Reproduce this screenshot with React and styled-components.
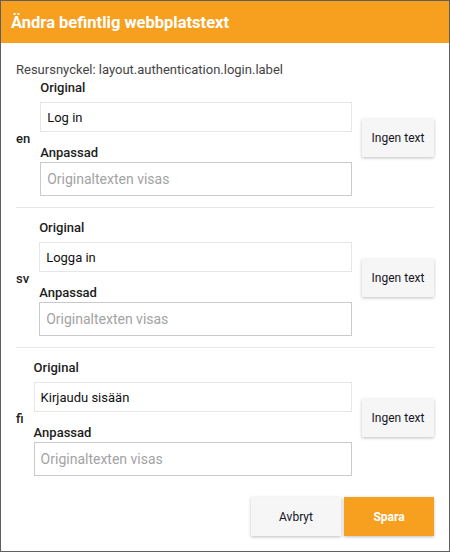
import React from "react";
import styled, { createGlobalStyle } from "styled-components";

const GlobalStyle = createGlobalStyle`
  body {
    margin: 0;
    background: #fff;
    font-family: Roboto, "Liberation Sans", sans-serif;
  }
`;

const languages = [
  { code: "en", original: "Log in" },
  { code: "sv", original: "Logga in" },
  { code: "fi", original: "Kirjaudu sisään" },
];

const Dialog = () => {
  return (
    <Wrapper>
      <Header>
        <Title>Ändra befintlig webbplatstext</Title>
      </Header>
      <Body>
        <ResourceKey>Resursnyckel: layout.authentication.login.label</ResourceKey>
        {languages.map((lang) => (
          <LangRow key={lang.code}>
            <LangCode>{lang.code}</LangCode>
            <Fields>
              <FieldLabel>Original</FieldLabel>
              <TextInput readOnly value={lang.original} />
              <FieldLabel $second>Anpassad</FieldLabel>
              <TextInput $custom placeholder="Originaltexten visas" />
            </Fields>
            <SideButton type="button">Ingen text</SideButton>
          </LangRow>
        ))}
        <Footer>
          <ActionButton type="button">Avbryt</ActionButton>
          <ActionButton type="button" $primary>
            Spara
          </ActionButton>
        </Footer>
      </Body>
    </Wrapper>
  );
};

const Wrapper = styled.div`
  width: 450px;
  height: 552px;
  box-sizing: border-box;
  border: 1px solid #5f5f5f;
  background: #fff;
  display: flex;
  flex-direction: column;
`;

const Header = styled.header`
  height: 42px;
  background: #f79f1f;
  padding: 1px 10px 0;
  box-sizing: border-box;
  display: flex;
  align-items: center;
`;

const Title = styled.h1`
  margin: 0;
  font-size: 16.5px;
  font-weight: 700;
  color: #fff;
`;

const Body = styled.div`
  padding: 19px 15px 15px;
`;

const ResourceKey = styled.div`
  font-size: 13px;
  line-height: 16px;
  color: #444;
  margin-bottom: 2px;
`;

const LangRow = styled.section`
  display: flex;
  align-items: center;
  gap: 10px;
  padding: 12px 0 11px;
  border-bottom: 1px solid #e6e6e6;

  &:first-of-type {
    padding-top: 0;
  }
  &:last-of-type {
    border-bottom: none;
  }
`;

const LangCode = styled.div`
  font-size: 13px;
  font-weight: 500;
  color: #222;
`;

const Fields = styled.div`
  flex: 1;
  display: flex;
  flex-direction: column;
`;

const FieldLabel = styled.label`
  display: block;
  font-size: 13px;
  font-weight: 500;
  line-height: 16px;
  color: #1c1c1c;
  margin: ${(p) => (p.$second ? "13px 0 1px" : "0 0 6px")};
`;

const TextInput = styled.input`
  box-sizing: border-box;
  width: 100%;
  height: ${(p) => (p.$custom ? "34px" : "30px")};
  border: 1px solid ${(p) => (p.$custom ? "#cacaca" : "#e6e6e6")};
  border-radius: 0;
  padding: 0 6px;
  margin: 0;
  font-family: Roboto, sans-serif;
  font-size: ${(p) => (p.$custom ? "14px" : "13px")};
  color: #111;
  background: #fff;
  outline: none;

  &::placeholder {
    color: #a3a3a3;
  }
`;

const SideButton = styled.button`
  width: 72px;
  height: 38px;
  border: none;
  background: #f6f6f6;
  box-shadow: 0 1px 3px rgba(0, 0, 0, 0.25);
  font-family: Roboto, sans-serif;
  font-size: 12px;
  color: #141424;
  padding: 0;
  cursor: pointer;
`;

const Footer = styled.div`
  display: flex;
  justify-content: flex-end;
  gap: 3px;
  margin-top: 10px;
`;

const ActionButton = styled.button`
  width: 90px;
  height: 39px;
  border: none;
  padding: 0;
  background: ${(p) => (p.$primary ? "#f79f1f" : "#f6f6f6")};
  color: ${(p) => (p.$primary ? "#fff" : "#141424")};
  font-family: Roboto, sans-serif;
  font-size: 12px;
  font-weight: ${(p) => (p.$primary ? 700 : 400)};
  box-shadow: 0 1px 3px rgba(0, 0, 0, 0.25);
  cursor: pointer;
`;

export default function App() {
  return (
    <>
      <GlobalStyle />
      <Dialog />
    </>
  );
}
